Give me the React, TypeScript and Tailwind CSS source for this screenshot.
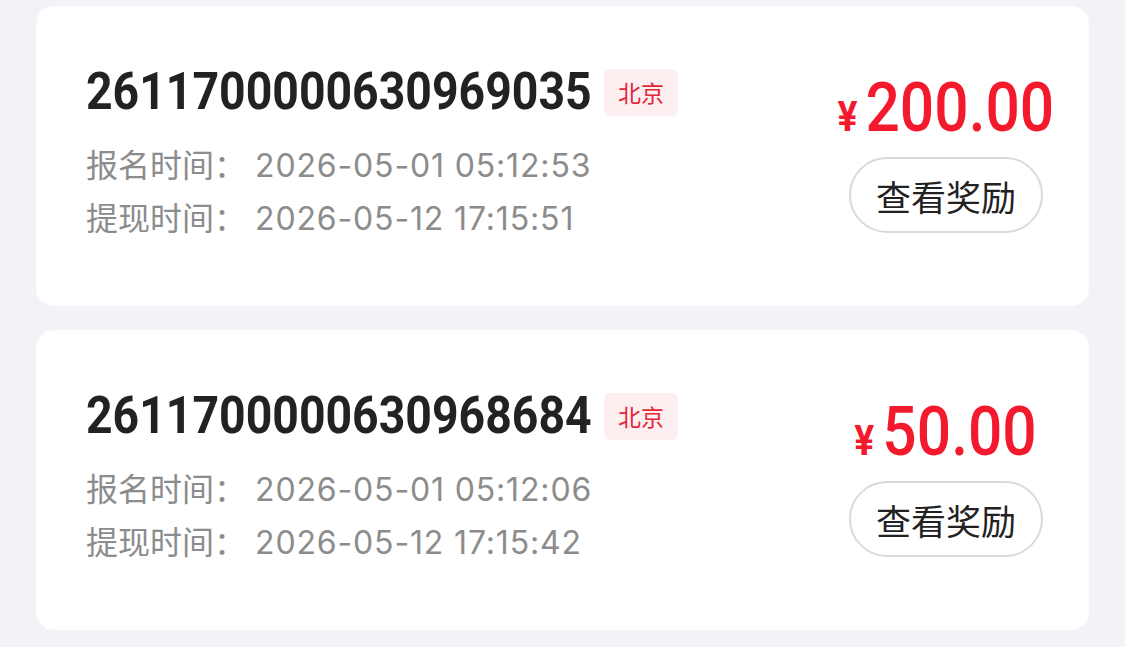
import React from "react";

type Item = {
  id: string;
  city: string;
  signup: string;
  withdraw: string;
  amount: string;
};

const items: Item[] = [
  {
    id: "2611700000630969035",
    city: "北京",
    signup: "2026-05-01 05:12:53",
    withdraw: "2026-05-12 17:15:51",
    amount: "200.00",
  },
  {
    id: "2611700000630968684",
    city: "北京",
    signup: "2026-05-01 05:12:06",
    withdraw: "2026-05-12 17:15:42",
    amount: "50.00",
  },
];

const cjk = { fontFamily: '"Noto Sans CJK SC", "Noto Sans", sans-serif' };

function InfoLine({ label, value }: { label: string; value: string }) {
  return (
    <div className="flex h-[53px] items-baseline leading-[53px] text-[#8c8c8c]">
      <span className="text-[32px]" style={cjk}>
        {label}
      </span>
      <span
        className="ml-[9px] text-[32px] tracking-[0.85px]"
        style={{ fontFamily: 'Inter, "Noto Sans", sans-serif' }}
      >
        {value}
      </span>
    </div>
  );
}

function Card({ item }: { item: Item }) {
  return (
    <div className="flex h-[300px] items-start justify-between rounded-[18px] bg-white pl-[50px] pr-[46px]">
      <div className="flex flex-col pt-[58px]">
        <div className="flex h-[56px] items-center">
          <span className="w-[504px] overflow-visible whitespace-nowrap">
            <span
              className="inline-block origin-left scale-x-[0.892] text-[52px] font-bold leading-[56px] text-[#222222]"
              style={{ fontFamily: 'Roboto, "Liberation Sans", sans-serif' }}
            >
              {item.id}
            </span>
          </span>
          <span
            className="ml-[14px] flex h-[47px] items-center rounded-[6px] bg-[#fdeef0] px-[14px] text-[23px] text-[#e2283a]"
            style={cjk}
          >
            {item.city}
          </span>
        </div>
        <div className="mt-[17px] flex flex-col">
          <InfoLine label="报名时间：" value={item.signup} />
          <InfoLine label="提现时间：" value={item.withdraw} />
        </div>
      </div>
      <div className="flex w-[194px] flex-col items-center pt-[68px]">
        <div
          className="inline-flex h-[68px] scale-x-[0.89] items-baseline whitespace-nowrap leading-[68px] text-[#f31a2d]"
          style={{ fontFamily: 'Roboto, "Liberation Sans", sans-serif' }}
        >
          <span className="mr-[9px] text-[42px] font-bold">¥</span>
          <span className="text-[68px] font-medium">{item.amount}</span>
        </div>
        <button
          className="mt-[15px] flex h-[76px] w-[194px] items-center justify-center rounded-full border-2 border-[#dadada] bg-white text-[35px] leading-none text-[#222222]"
          style={cjk}
        >
          查看奖励
        </button>
      </div>
    </div>
  );
}

export default function App() {
  return (
    <div className="min-h-[647px] w-full bg-[#f2f2f7] px-[36px] pt-[6px]">
      <div className="flex flex-col gap-[24px]">
        {items.map((it) => (
          <Card key={it.id} item={it} />
        ))}
      </div>
    </div>
  );
}
